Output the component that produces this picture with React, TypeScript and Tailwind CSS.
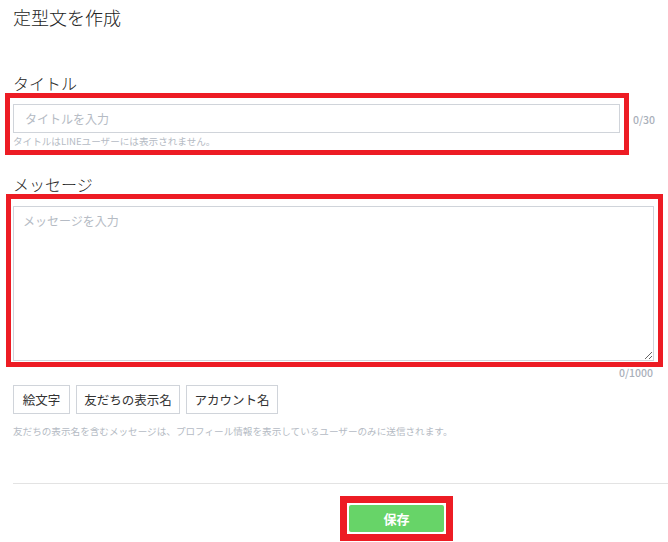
import { useState } from "react";

const FONT = { fontFamily: '"Noto Sans CJK JP", "Noto Sans", "Liberation Sans", sans-serif' };

const InsertButton = ({ label, width }: { label: string; width: string }) => (
  <button
    type="button"
    className={`${width} h-[29px] border border-[#d0d4da] bg-white text-[12.5px] leading-[27px] text-[#333] text-center`}
  >
    {label}
  </button>
);

const App = () => {
  const [title, setTitle] = useState("");
  const [message, setMessage] = useState("");

  return (
    <div className="w-[668px] h-[542px] bg-white overflow-hidden text-[#222]" style={FONT}>
      <h1 className="pt-[5px] pl-[13px] text-[18px] leading-[24px] font-light">定型文を作成</h1>

      {/* title */}
      <div className="mt-[44px] pl-[13px] text-[16px] leading-[20px] font-light">タイトル</div>
      <div className="flex items-start">
        <div className="ml-[5px] w-[624px] h-[62px] border-[5px] border-[#ed1c24] pl-[3px] pr-[4px] pt-[6px]">
          <input
            value={title}
            onChange={(e) => setTitle(e.target.value)}
            placeholder="タイトルを入力"
            className="block w-full h-[29px] border border-[#d0d4da] px-[11px] text-[12px] outline-none placeholder:text-[#b5bbc4]"
          />
          <p className="text-[9.6px] leading-[17px] text-[#b5bbc4]">
            タイトルはLINEユーザーには表示されません。
          </p>
        </div>
        <span className="ml-[4px] mt-[19px] text-[10.5px] font-medium text-[#a9b0ba]">
          {title.length}/30
        </span>
      </div>

      {/* message */}
      <div className="mt-[19px] pl-[13px] text-[16px] leading-[20px] font-light">メッセージ</div>
      <div className="ml-[6px] w-[657px] h-[173px] border-[5px] border-[#ed1c24] pl-[2px] pr-[4px] pt-[7px]">
        <textarea
          value={message}
          onChange={(e) => setMessage(e.target.value)}
          placeholder="メッセージを入力"
          className="block w-full h-[155px] border border-[#d0d4da] px-[9px] py-[5px] text-[12px] leading-[18px] outline-none placeholder:text-[#b5bbc4]"
        />
      </div>
      <div className="pr-[15px] text-right text-[10.5px] leading-[11px] font-medium text-[#a9b0ba]">
        {message.length}/1000
      </div>

      <div className="mt-[7px] pl-[13px] flex gap-[6px]">
        <InsertButton label="絵文字" width="w-[57px]" />
        <InsertButton label="友だちの表示名" width="w-[104px]" />
        <InsertButton label="アカウント名" width="w-[92px]" />
      </div>
      <p className="mt-[10px] pl-[13px] text-[9.6px] leading-[14px] text-[#b5bbc4]">
        友だちの表示名を含むメッセージは、プロフィール情報を表示しているユーザーのみに送信されます。
      </p>

      <div className="mt-[45px] ml-[13px] border-t border-[#e3e3e3]" />

      <div className="mt-[12px] ml-[340px] w-[113px] h-[45px] border-[7px] border-[#ed1c24] p-[2px]">
        <button
          type="button"
          className="w-full h-full rounded-[2px] bg-[#67d468] text-white text-[13px] font-bold"
        >
          保存
        </button>
      </div>
    </div>
  );
};

export default App;
